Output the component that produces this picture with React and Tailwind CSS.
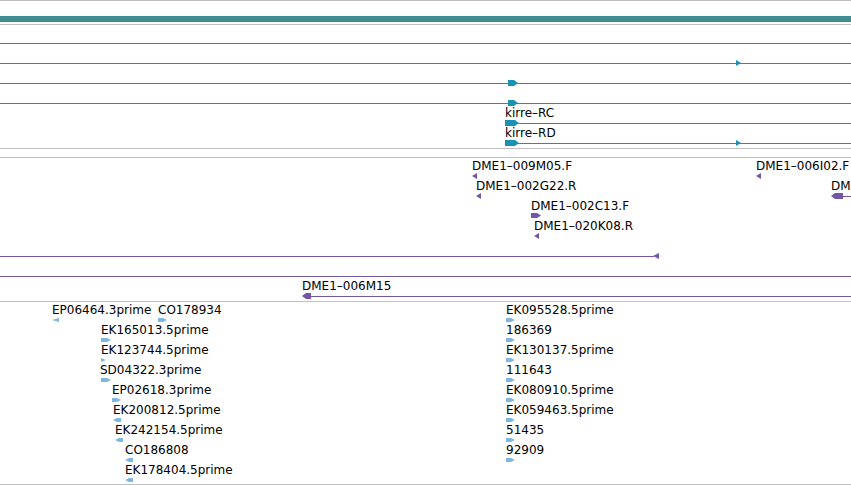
const BLUE = "#1b92b3";
const PURPLE = "#7456a8";
const EST = "#7fb7de";

// glyph shapes, drawn in a w x h box
const shapePoints = (type, w, h) => {
  const t = Math.min(4, w);
  switch (type) {
    case "tri-r":
      return `0,0 ${w},${h / 2} 0,${h}`;
    case "tri-l":
      return `${w},0 0,${h / 2} ${w},${h}`;
    case "arr-r":
      return `0,0 ${w - t},0 ${w},${h / 2} ${w - t},${h} 0,${h}`;
    case "arr-l":
      return `${t},0 ${w},0 ${w},${h} ${t},${h} 0,${h / 2}`;
    default:
      return "";
  }
};

const Glyph = ({ type, x, w, h = 6, top = 15, color }) => (
  <svg
    className="absolute"
    style={{ left: x, top }}
    width={w}
    height={h}
    viewBox={`0 0 ${w} ${h}`}
  >
    <polygon points={shapePoints(type, w, h)} fill={color} />
  </svg>
);

const Line = ({ from, to, color }) => (
  <div
    className="absolute top-[18px] h-px"
    style={{ left: from, width: to - from, backgroundColor: color }}
  />
);

const Label = ({ x, text }) => (
  <div className="absolute top-[1px] whitespace-nowrap" style={{ left: x }}>
    {text}
  </div>
);

const Row = ({ row, color, glyphH, glyphTop }) => (
  <div className="relative h-[20px]">
    {(row.lines || []).map((l, i) => (
      <Line key={"l" + i} from={l[0]} to={l[1]} color={color} />
    ))}
    {(row.glyphs || []).map((g, i) => (
      <Glyph
        key={"g" + i}
        type={g[0]}
        x={g[1]}
        w={g[2]}
        h={g[3] || glyphH}
        top={glyphTop}
        color={color}
      />
    ))}
    {(row.labels || []).map((lb, i) => (
      <Label key={"t" + i} x={lb[0]} text={lb[1]} />
    ))}
  </div>
);

const transcripts = [
  { lines: [[0, 851]] },
  { lines: [[0, 851]], glyphs: [["tri-r", 736, 5]] },
  { lines: [[0, 851]], glyphs: [["arr-r", 508, 10]] },
  { lines: [[0, 851]], glyphs: [["arr-r", 508, 10]] },
  { lines: [[505, 851]], glyphs: [["arr-r", 505, 14]], labels: [[505, "kirre–RC"]] },
  {
    lines: [[505, 851]],
    glyphs: [["arr-r", 505, 14], ["tri-r", 736, 5]],
    labels: [[505, "kirre–RD"]],
  },
];

const clones = [
  {
    glyphs: [["tri-l", 472, 5], ["tri-l", 756, 5]],
    labels: [[472, "DME1–009M05.F"], [756, "DME1–006I02.F"]],
  },
  {
    lines: [[842, 851]],
    glyphs: [["tri-l", 476, 5], ["arr-l", 831, 12]],
    labels: [[476, "DME1–002G22.R"], [831, "DM"]],
  },
  { glyphs: [["arr-r", 531, 10, 5]], labels: [[531, "DME1–002C13.F"]] },
  { glyphs: [["tri-l", 534, 5]], labels: [[534, "DME1–020K08.R"]] },
  { lines: [[0, 654]], glyphs: [["tri-l", 653, 6]] },
  { lines: [[0, 851]] },
  {
    lines: [[309, 851]],
    glyphs: [["arr-l", 302, 9]],
    labels: [[302, "DME1–006M15"]],
  },
];

const ests = [
  {
    glyphs: [["tri-l", 52, 7], ["arr-r", 158, 9], ["arr-r", 506, 9]],
    labels: [[52, "EP06464.3prime"], [158, "CO178934"], [506, "EK095528.5prime"]],
  },
  {
    glyphs: [["arr-r", 101, 10], ["arr-r", 506, 9]],
    labels: [[101, "EK165013.5prime"], [506, "186369"]],
  },
  {
    glyphs: [["tri-r", 101, 5], ["arr-r", 506, 9]],
    labels: [[101, "EK123744.5prime"], [506, "EK130137.5prime"]],
  },
  {
    glyphs: [["arr-r", 101, 10], ["arr-r", 506, 9]],
    labels: [[100, "SD04322.3prime"], [506, "111643"]],
  },
  {
    glyphs: [["arr-r", 112, 9], ["arr-r", 506, 9]],
    labels: [[112, "EP02618.3prime"], [506, "EK080910.5prime"]],
  },
  {
    glyphs: [["arr-l", 113, 8], ["arr-r", 506, 9]],
    labels: [[113, "EK200812.5prime"], [506, "EK059463.5prime"]],
  },
  {
    glyphs: [["arr-l", 115, 8], ["arr-r", 506, 9]],
    labels: [[115, "EK242154.5prime"], [506, "51435"]],
  },
  {
    glyphs: [["arr-l", 125, 8], ["arr-r", 506, 9]],
    labels: [[125, "CO186808"], [506, "92909"]],
  },
  { glyphs: [["arr-l", 125, 8]], labels: [[125, "EK178404.5prime"]] },
];

const Rule = () => <div className="h-px bg-[#c0c0c0]" />;

export default function App() {
  return (
    <div className="w-[851px] h-[485px] overflow-hidden bg-white font-['DejaVu_Sans',sans-serif] text-[12px] leading-[14px] text-black">
      <Rule />
      {/* overview bar */}
      <div className="pt-[15px] pb-[2px]">
        <div className="h-[6px] bg-[#408e92]" />
      </div>
      <Rule />

      {/* gene models */}
      <div className="pb-[3px]">
        {transcripts.map((r, i) => (
          <Row key={i} row={r} color={BLUE} glyphH={6} glyphTop={15} />
        ))}
      </div>
      <Rule />
      <div className="h-[8px]" />
      <Rule />

      {/* BAC / cDNA clones */}
      <div className="pb-[3px]">
        {clones.map((r, i) => (
          <Row key={i} row={r} color={PURPLE} glyphH={6} glyphTop={15} />
        ))}
      </div>
      <Rule />

      {/* ESTs */}
      <div className="pb-[2px]">
        {ests.map((r, i) => (
          <Row key={i} row={r} color={EST} glyphH={4} glyphTop={16} />
        ))}
      </div>
      <Rule />
    </div>
  );
}
